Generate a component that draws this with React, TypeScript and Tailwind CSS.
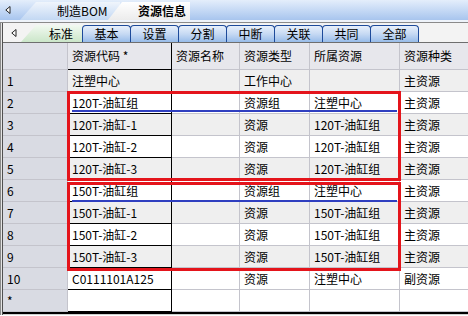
const rows = [
  ['1', '注塑中心', '', '工作中心', '', '主资源'],
  ['2', '120T-油缸组', '', '资源组', '注塑中心', '主资源'],
  ['3', '120T-油缸-1', '', '资源', '120T-油缸组', '主资源'],
  ['4', '120T-油缸-2', '', '资源', '120T-油缸组', '主资源'],
  ['5', '120T-油缸-3', '', '资源', '120T-油缸组', '主资源'],
  ['6', '150T-油缸组', '', '资源组', '注塑中心', '主资源'],
  ['7', '150T-油缸-1', '', '资源', '150T-油缸组', '主资源'],
  ['8', '150T-油缸-2', '', '资源', '150T-油缸组', '主资源'],
  ['9', '150T-油缸-3', '', '资源', '150T-油缸组', '主资源'],
  ['10', 'C0111101A125', '', '资源', '注塑中心', '副资源'],
  ['*', '', '', '', '', ''],
];

const heads = ['', '资源代码 *', '资源名称', '资源类型', '所属资源', '资源种类'];
const tabs = ['基本', '设置', '分割', '中断', '关联', '共同', '全部'];

const Arrow = () => (
  <svg width="6" height="8" viewBox="0 0 6 8">
    <polygon points="5,0.5 5,7.5 0.8,4" fill="#fff" stroke="#222" strokeWidth="1" />
  </svg>
);

const cellBorder = (c: number) => (c === 1 ? 'border-r border-black' : 'border-r border-[#c4c4cc]');

export default function App() {
  return (
    <div
      className="w-[468px] h-[316px] overflow-hidden bg-white text-[12px] text-black leading-none"
      style={{ fontFamily: '"Noto Sans CJK SC", "Liberation Sans", sans-serif' }}
    >
      {/* window tabs */}
      <div className="h-[20px] flex items-end bg-gradient-to-b from-[#e4eefb] to-[#a8c5ee]">
        <div className="w-[20px] self-stretch flex items-center pl-[5px]">
          <Arrow />
        </div>
        <div className="h-[18px] w-[100px] flex items-center pl-[37px] bg-gradient-to-b from-[#f0f5fc] to-[#c3d8f3] [clip-path:polygon(16px_0,100%_0,100%_100%,0_100%)]">
          制造BOM
        </div>
        <div className="-ml-[12px] h-[18px] w-[82px] flex items-center pl-[30px] font-bold bg-gradient-to-b from-white to-[#ececec] [clip-path:polygon(14px_0,100%_0,100%_100%,0_100%)]">
          资源信息
        </div>
      </div>
      <div className="h-[2px] bg-[#eef3fa]" />
      <div className="h-px bg-[#8a8a8a]" />

      <div className="relative border-l border-[#8a8a8a] pl-px bg-[#e4e4e4]">
        <div className="border-l border-[#505050] bg-white">
          {/* form tabs */}
          <div className="h-[20px] flex items-end bg-[#f3f3f3] border-b border-[#6e6e6e]">
            <div className="w-[18px] self-stretch flex items-center pl-[8px]">
              <Arrow />
            </div>
            <div className="h-[17px] w-[61px] flex items-center pl-[28px] bg-gradient-to-b from-[#f2f9f1] to-[#cbe6c9] [clip-path:polygon(15px_0,100%_0,100%_100%,0_100%)]">
              标准
            </div>
            {tabs.map((t, i) => (
              <div
                key={t}
                className={`${i > 0 ? '-ml-px' : ''} h-[17px] w-[49px] flex items-center justify-center rounded-t-[4px] border border-b-0 border-[#1d4a9a] bg-gradient-to-b from-[#e8f0fb] via-[#c6d9f3] to-[#98bce9]`}
              >
                {t}
              </div>
            ))}
          </div>

          {/* grid */}
          <div className="grid grid-cols-[65px_104px_68px_70px_90px_80px] border-b-2 border-black">
            {heads.map((h, c) => (
              <div
                key={'h' + c}
                className={`h-[27px] flex items-center pl-[4px] whitespace-nowrap border-b border-[#c4c4cc] ${cellBorder(c)} ${c === 0 ? 'bg-[#dfe0e8]' : 'bg-[#e7e7ec]'}`}
              >
                {h}
              </div>
            ))}
            {rows.map((r, ri) =>
              r.map((v, c) => (
                <div
                  key={ri + '-' + c}
                  className={`h-[22px] flex items-center whitespace-nowrap border-b border-[#c4c4cc] ${cellBorder(c)} ${
                    c === 0 ? 'bg-[#d9dbe3] pl-[4px]' : ri % 2 === 0 && ri < 10 ? 'bg-[#efefef] pl-[4px]' : 'bg-white pl-[4px]'
                  }`}
                >
                  {v}
                </div>
              ))
            )}
          </div>
          <div className="h-px bg-[#d0d0d0]" />
        </div>

        {/* highlights over the grid */}
        <div className="absolute left-[66px] top-[68px] w-[334px] h-[90px] border-[3px] border-[#e4141b]" />
        <div className="absolute left-[66px] top-[159px] w-[334px] h-[89px] border-[3px] border-[#e4141b]" />
        <div className="absolute left-[71px] top-[87px] w-[325px] h-[2px] bg-[#2f3fc0]" />
        <div className="absolute left-[71px] top-[177px] w-[325px] h-[2px] bg-[#2f3fc0]" />
      </div>
    </div>
  );
}
